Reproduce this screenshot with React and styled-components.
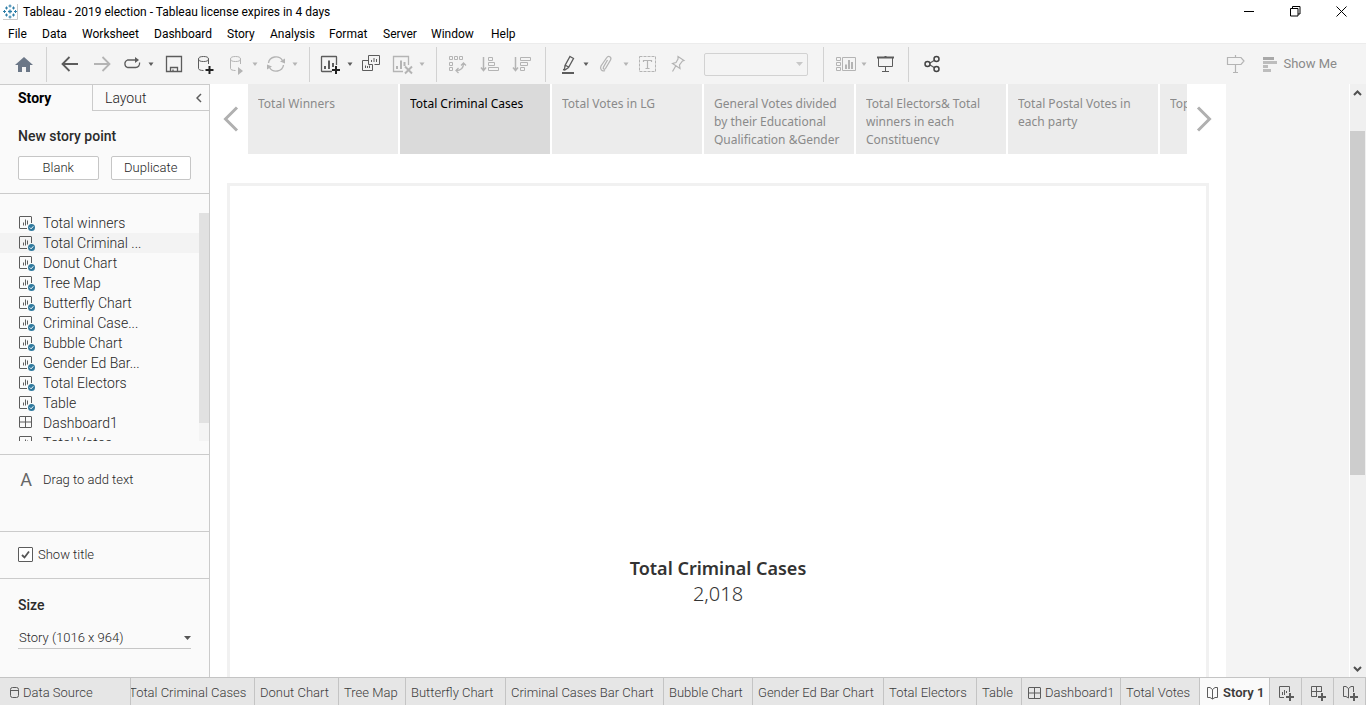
import React from "react";
import styled, { createGlobalStyle } from "styled-components";

const uiFont = `Roboto, "Liberation Sans", sans-serif`;
const bookFont = `"Noto Sans", "Open Sans", sans-serif`;

const GlobalStyle = createGlobalStyle`
  *, *::before, *::after { box-sizing: border-box; }
  body { margin: 0; background: #fff; font-family: ${uiFont}; color: #4a4a4a; }
  button, select, input { font: inherit; color: inherit; }
  button { padding: 0; border: 0; background: none; cursor: pointer; }
  ul { margin: 0; padding: 0; list-style: none; }
  h1, h2, p { margin: 0; }
`;

const Window = styled.div`
  display: flex;
  flex-direction: column;
  height: 100vh;
  overflow: hidden;
`;

/* ---------- title bar and menu ---------- */

const TitleBar = styled.header`
  display: flex;
  align-items: center;
  flex: none;
  height: 23px;
  padding: 0 2px 0 3px;
  gap: 5px;
  color: #000;
`;

const AppTitle = styled.h1`
  flex: 1;
  font-size: 12px;
  font-weight: 400;
  line-height: 16px;
`;

const AppLogo = styled.svg`
  width: 15px;
  height: 16px;
`;

const WindowButtons = styled.div`
  display: flex;
`;

const WindowButton = styled.button`
  display: grid;
  place-items: center;
  width: 46px;
  height: 20px;
`;

const MenuBar = styled.nav`
  display: flex;
  align-items: center;
  flex: none;
  height: 20px;
  padding: 2px 0 0 8px;
  color: #000;
  font-size: 12px;
  line-height: 16px;
`;

const MenuItem = styled.button`
  width: ${(p) => p.$width}px;
  flex: none;
  text-align: left;
  white-space: nowrap;
`;

/* ---------- toolbar ---------- */

const Toolbar = styled.div`
  display: flex;
  align-items: center;
  flex: none;
  height: 41px;
  padding: 0 29px 0 12px;
  border-top: 1px solid #ececec;
  background: #f4f4f4;
`;

const Tool = styled.button`
  display: block;
  flex: none;
  width: ${(p) => (p.$caret ? 8 : 24)}px;
  height: 24px;
  margin-left: ${(p) => p.$gap || 0}px;
  color: ${(p) => (p.$off ? "#b4b4b4" : "#5c5c5c")};
  svg { display: block; width: 100%; height: 24px; fill: none; stroke: currentColor; }
`;

const Divider = styled.span`
  flex: none;
  width: 1px;
  height: 35px;
  margin: 0 10px;
  background: #d2d2d2;
`;

const FitSelect = styled.div`
  display: grid;
  align-items: center;
  flex: none;
  width: 104px;
  margin: 0 5px 0 14px;
  > * { grid-area: 1 / 1; }
  svg { justify-self: end; margin-right: 5px; pointer-events: none; }
`;

const FitInput = styled.select`
  appearance: none;
  width: 100%;
  height: 23px;
  border: 1px solid #d2d2d2;
  border-radius: 2px;
  background: #f4f4f4;
  &:disabled { opacity: 1; }
`;

const Spacer = styled.span`
  flex: 1;
`;

const ShowMe = styled.button`
  display: flex;
  align-items: center;
  gap: 5px;
  margin-left: 16px;
  color: #8a8a8a;
  font-size: 13px;
  line-height: 20px;
`;

/* ---------- left pane ---------- */

const Workspace = styled.main`
  display: flex;
  flex: 1;
  min-height: 0;
`;

const Pane = styled.aside`
  display: flex;
  flex-direction: column;
  flex: none;
  width: 210px;
  border-right: 1px solid #cbcbcb;
  background: #fafafa;
  color: #262626;
  font-weight: 300;
`;

const PaneTabs = styled.div`
  display: flex;
  flex: none;
  height: 27px;
  border-top: 1px solid #cbcbcb;
`;

const PaneTab = styled.button`
  display: flex;
  align-items: center;
  justify-content: space-between;
  width: ${(p) => (p.$active ? 92 : 117)}px;
  padding: 0 7px 0 ${(p) => (p.$active ? 18 : 12)}px;
  border-left: ${(p) => (p.$active ? 0 : 1)}px solid #cbcbcb;
  border-bottom: ${(p) => (p.$active ? 0 : 1)}px solid #cbcbcb;
  color: ${(p) => (p.$active ? "#000" : "#222")};
  font-size: 14px;
  font-weight: ${(p) => (p.$active ? 700 : 300)};
`;

const Section = styled.section`
  flex: none;
  height: ${(p) => p.$height}px;
  padding: ${(p) => p.$pad || "0 18px"};
  border-bottom: 1px solid #cbcbcb;
`;

const Heading = styled.h2`
  display: block;
  color: #2b2b2b;
  font-size: 14px;
  font-weight: 500;
  line-height: 18px;
`;

const ButtonRow = styled.div`
  display: flex;
  gap: 12px;
  margin-top: 11px;
`;

const PointButton = styled.button`
  width: 81px;
  height: 24px;
  border: 1px solid #c6c6c6;
  border-radius: 2px;
  background: #fff;
  font-size: 13px;
  line-height: 20px;
`;

const SheetArea = styled.div`
  display: flex;
  height: 228px;
  overflow: hidden;
`;

const SheetList = styled.ul`
  flex: 1;
`;

const SheetRow = styled.li`
  display: flex;
  align-items: center;
  gap: 7px;
  height: 20px;
  padding-left: 18px;
  background: ${(p) => (p.$active ? "#f3f3f3" : "transparent")};
  font-size: 14px;
  line-height: 20px;
  svg { flex: none; }
`;

const ListTrack = styled.div`
  width: 10px;
  background: #f4f4f4;
`;

const ListThumb = styled.div`
  height: 92%;
  background: #e1e1e1;
`;

const DragText = styled.div`
  display: flex;
  align-items: center;
  gap: 9px;
  height: 48px;
  padding-left: 18px;
  font-size: 13px;
`;

const LetterA = styled.span`
  width: 16px;
  color: #666;
  font-size: 18px;
  font-weight: 400;
  text-align: center;
`;

const CheckLabel = styled.label`
  display: flex;
  align-items: center;
  gap: 5px;
  height: 44px;
  font-size: 13px;
`;

const CheckBox = styled.input`
  appearance: none;
  width: 15px;
  height: 15px;
  margin: 0;
  border: 1px solid #5c5c5c;
  border-radius: 1px;
  background: #fff url("data:image/svg+xml,%3Csvg xmlns='http://www.w3.org/2000/svg' width='13' height='13'%3E%3Cpath d='M3 7l2.5 2.5L10 3.5' fill='none' stroke='%23555' stroke-width='1.8'/%3E%3C/svg%3E") center no-repeat;
`;

const SizeBlock = styled.div`
  padding: 17px 18px 0;
`;

const SizeField = styled.div`
  display: grid;
  align-items: center;
  margin-top: 12px;
  > * { grid-area: 1 / 1; }
  svg { justify-self: end; pointer-events: none; }
`;

const SizeSelect = styled.select`
  appearance: none;
  width: 100%;
  height: 23px;
  padding: 0 0 0 1px;
  border: 0;
  border-bottom: 1px solid #c6c6c6;
  background: transparent;
  font-size: 13px;
`;

/* ---------- story canvas ---------- */

const Canvas = styled.div`
  display: flex;
  flex: 1;
  min-width: 0;
  background: #f4f4f4;
`;

const Story = styled.article`
  flex: 0 1 1016px;
  min-width: 0;
  overflow: hidden;
  background: #fff;
`;

const Navigator = styled.div`
  display: flex;
  height: 70px;
`;

const NavArrow = styled.button`
  flex: none;
  display: flex;
  align-items: center;
  justify-content: ${(p) => (p.$next ? "flex-start" : "flex-end")};
  width: ${(p) => (p.$next ? 39 : 38)}px;
  height: 70px;
  padding: 0 9px;
`;

const PointStrip = styled.div`
  display: flex;
  flex: 1;
  gap: 2px;
  min-width: 0;
  overflow: hidden;
`;

const PointCard = styled.button`
  flex: none;
  display: flex;
  align-items: flex-start;
  width: 150px;
  height: 70px;
  padding: 11px 10px 0;
  background: ${(p) => (p.$active ? "#dadada" : "#ececec")};
  color: ${(p) => (p.$active ? "#000" : "#8a8a8a")};
  font: 400 12px/18px ${bookFont};
  text-align: left;
`;

const CardText = styled.span`
  max-height: 50px;
  overflow: hidden;
`;

const StoryFrame = styled.section`
  display: flex;
  flex-direction: column;
  align-items: center;
  justify-content: center;
  height: 796px;
  margin: 29px 17px 0;
  border: 3px solid #f1f1f1;
  color: #333;
  font-family: ${bookFont};
`;

const FigureTitle = styled.h2`
  font-size: 18px;
  font-weight: 600;
  line-height: 26px;
`;

const FigureValue = styled.p`
  font-size: 20px;
  font-weight: 300;
  line-height: 26px;
`;

const ScrollTrack = styled.div`
  display: flex;
  flex-direction: column;
  flex: none;
  width: 17px;
  padding: 0 1px 0 0;
  margin-left: auto;
  border-left: 1px solid #fff;
  background: #f0f0f0;
`;

const ScrollEnd = styled.button`
  display: grid;
  place-items: center;
  flex: none;
  height: 17px;
`;

const ScrollRail = styled.div`
  flex: 1;
  padding-top: 30px;
`;

const ScrollThumb = styled.div`
  height: 65%;
  background: #cdcdcd;
`;

/* ---------- sheet tabs ---------- */

const TabBar = styled.footer`
  display: flex;
  flex: none;
  height: 28px;
  border-top: 1px solid #c4c4c4;
  background: #e6e6e6;
`;

const SheetTab = styled.button`
  display: flex;
  align-items: center;
  justify-content: ${(p) => (p.$icon ? "center" : "flex-start")};
  gap: 4px;
  flex: none;
  width: ${(p) => p.$width}px;
  padding: 2px 0 0 ${(p) => (p.$icon ? 0 : p.$pad ?? 5)}px;
  overflow: hidden;
  border-right: 1px solid #c4c4c4;
  background: ${(p) => (p.$active ? "#fafafa" : "transparent")};
  color: #3c3c3c;
  font-size: 13px;
  font-weight: ${(p) => (p.$active ? 600 : 300)};
  line-height: 20px;
  white-space: nowrap;
  svg { flex: none; }
`;

const ClippedLabel = styled.span`
  margin-left: -2px;
`;

/* ---------- drawings ---------- */

const Caret = ({ gap, off }) => (
  <Tool $caret $gap={gap} $off={off} aria-label="More options">
    <svg viewBox="0 0 8 24"><path d="M1.500 10.500h5L4 14z" fill="currentColor" stroke="none" /></svg>
  </Tool>
);

const Icon = ({ gap, off, label, children }) => (
  <Tool $gap={gap} $off={off} aria-label={label}>
    <svg viewBox="0 0 24 24">{children}</svg>
  </Tool>
);

const DownArrow = ({ color }) => (
  <svg width="7" height="4" viewBox="0 0 7 4"><path d="M0 0h7L3.500 4z" fill={color} /></svg>
);

const Logo = () => (
  <AppLogo viewBox="0 0 15 16">
    <path d="M14.500 0v15.500H0" fill="none" stroke="#c9c9c9" />
    <g stroke="#2f7fa8" fill="none">
      <path d="M7 5.500v4M5 7.500h4" strokeWidth="1.300" />
      <path d="M7 0.500v3M5.500 2h3M7 11.500v3M5.500 13h3M1.500 6v3M0 7.500h3M12.500 6v3M11 7.500h3" />
      <path d="M3.500 2.500v3M2 4h3M10.500 2.500v3M9 4h3M3.500 9.500v3M2 11h3M10.500 9.500v3M9 11h3" />
    </g>
  </AppLogo>
);

const WorksheetIcon = () => (
  <svg width="18" height="18" viewBox="0 0 18 18" fill="none">
    <path d="M9 14.500H2a.5.5 0 0 1-.5-.5V3a.5.5 0 0 1 .5-.5h11a.5.5 0 0 1 .5.5v6" stroke="#5c5c5c" />
    <path d="M5.500 8.500v3M7.500 5.500v6M9.500 6.500v4" stroke="#5c5c5c" />
    <circle cx="13.500" cy="13.500" r="3.500" fill="#317a9e" />
    <path d="M11.800 13.500l1.300 1.300 2.200-2.500" stroke="#fff" />
  </svg>
);

const GridIcon = ({ size = 18 }) => (
  <svg width={size} height={size} viewBox={size === 18 ? "0 0 18 18" : "1 1 13 13"} fill="none" stroke="#5c5c5c">
    <rect x="1.500" y="2.500" width="12" height="11" rx=".5" />
    <path d="M7.500 2.500v11M1.500 8h12" />
  </svg>
);

const NewTabIcon = ({ kind }) => (
  <svg width="18" height="16" viewBox="0 0 18 16" fill="none" stroke="#5c5c5c">
    {kind === "sheet" && <path d="M7 12.500H2.500v-11h10V7M5.500 7v3M7.500 5v5M9.500 6v2" />}
    {kind === "dash" && <path d="M8 11.500H2.500v-10h10V7M7.500 1.500v10M2.500 6.500h10" />}
    {kind === "story" && <path d="M7.500 3.500L5 1.500H2.500v10H5l2.500 1.500M7.500 3.500L10 1.500h2.500V7M7.500 3.500V13" />}
    <path d="M13 8v8M9 12h8" strokeWidth="2" />
  </svg>
);

const Cylinder = () => (
  <>
    <ellipse cx="10.500" cy="7" rx="5" ry="2.500" />
    <path d="M5.500 7v9.500c0 1.200 2 2 5 2M15.500 7v5" />
  </>
);

const Chevron = ({ left }) => (
  <svg width="16" height="26" viewBox="0 0 16 26" fill="none" stroke="#b0b0b0" strokeWidth="3">
    <path d={left ? "M14 1.500L2.500 13 14 24.500" : "M2 1.500L13.500 13 2 24.500"} />
  </svg>
);

/* ---------- data ---------- */

const menus = [["File", 34], ["Data", 40], ["Worksheet", 72], ["Dashboard", 73], ["Story", 43], ["Analysis", 59], ["Format", 54], ["Server", 48], ["Window", 60], ["Help", 30]];

const sheets = ["Total winners", "Total Criminal ...", "Donut Chart", "Tree Map", "Butterfly Chart", "Criminal Case...", "Bubble Chart", "Gender Ed Bar...", "Total Electors", "Table", "Dashboard1", "Total Votes"];

const points = ["Total Winners", "Total Criminal Cases", "Total Votes in LG", "General Votes divided by their Educational Qualification &Gender", "Total Electors& Total winners in each Constituency", "Total Postal Votes in each party", "Top"];

const tabs = [["Donut Chart", 84], ["Tree Map", 67], ["Butterfly Chart", 100], ["Criminal Cases Bar Chart", 158], ["Bubble Chart", 89], ["Gender Ed Bar Chart", 131], ["Total Electors", 93], ["Table", 45]];

export default function App() {
  return (
    <Window>
      <GlobalStyle />
      <TitleBar>
        <Logo />
        <AppTitle>Tableau - 2019 election - Tableau license expires in 4 days</AppTitle>
        <WindowButtons>
          <WindowButton aria-label="Minimize">
            <svg width="11" height="11"><path d="M0 5.500h10" stroke="#000" /></svg>
          </WindowButton>
          <WindowButton aria-label="Restore">
            <svg width="11" height="11" fill="none" stroke="#000"><path d="M.5 2.500h7.500v7.500H.5zM2.500 2.500v-2h7.500V8H8" /></svg>
          </WindowButton>
          <WindowButton aria-label="Close">
            <svg width="11" height="11" stroke="#000"><path d="M.5.5l10 10M10.500.5l-10 10" /></svg>
          </WindowButton>
        </WindowButtons>
      </TitleBar>

      <MenuBar>
        {menus.map(([name, width]) => <MenuItem key={name} $width={width}>{name}</MenuItem>)}
      </MenuBar>

      <Toolbar>
        <Icon label="Home"><path d="M3 13l9-8 9 8h-3v7h-4v-5h-4v5H6v-7z" fill="#6b7787" stroke="none" /></Icon>
        <Divider />
        <Icon label="Undo"><path d="M12.500 5L5.500 12l7 7M5.500 12H21" strokeWidth="1.800" /></Icon>
        <Icon gap={8} off label="Redo"><path d="M13.500 5l7 7-7 7M20.500 12H5" strokeWidth="1.800" /></Icon>
        <Icon gap={6} label="Replay">
          <path d="M17 8H8.500a4 4 0 0 0 0 7.500h8a4 4 0 0 0 4-5" strokeWidth="1.300" />
          <path d="M16 5l4 3-4 3z" fill="currentColor" stroke="none" />
        </Icon>
        <Caret gap={4} />
        <Icon gap={6} label="Save"><path d="M5.500 4.500h15v15h-15zM9.500 19.500v-4h7v4M12 17.500v2" strokeWidth="1.300" /></Icon>
        <Icon gap={8} label="New data source">
          <Cylinder /><path d="M16.500 14v8M12.500 18h8" stroke="#222" strokeWidth="2" />
        </Icon>
        <Icon gap={8} off label="Run updates">
          <Cylinder /><path d="M13 15l5 4-5 4z" fill="currentColor" stroke="none" />
        </Icon>
        <Caret gap={2} off />
        <Icon gap={4} off label="Refresh">
          <path d="M5.500 11a7.500 7 0 0 1 14-2.500M20.500 13a7.500 7 0 0 1-14 2.500" strokeWidth="1.400" />
          <path d="M22 6.500v5l-5-2zM4 17.500v-5l5 2z" fill="currentColor" stroke="none" />
        </Icon>
        <Caret gap={4} off />
        <Divider />
        <Icon label="New worksheet">
          <path d="M12 19.500H2a.5.5 0 0 1-.5-.5V5a.5.5 0 0 1 .5-.5h14a.5.5 0 0 1 .5.500v8" strokeWidth="1.300" />
          <path d="M5 14v3M9 8.500V17M13 11v4" strokeWidth="2" />
          <path d="M16 14v8M12 18h8" stroke="#222" strokeWidth="2" />
        </Icon>
        <Caret gap={2} />
        <Icon gap={4} label="Duplicate sheet">
          <path d="M10.500 9V3.500h11v9h-5M10.500 8.500h-6v10h10v-6h-4v-4M13.500 8v2M16 6v4M18.500 7v3M7.500 13.500V16M9.500 14v2M11.500 13.500V16" />
        </Icon>
        <Icon gap={8} off label="Clear sheet">
          <path d="M13 19.500H3.500v-15h15V13" strokeWidth="1.300" />
          <path d="M7 14v3M11 8.500V17M14.500 10v4" strokeWidth="2" />
          <path d="M15 14.500l7 7M22 14.500l-7 7" strokeWidth="2" />
        </Icon>
        <Caret gap={4} off />
        <Divider />
        <Icon off label="Swap rows and columns">
          <path d="M2.500 4.500h3v3h-3zM7.500 4.500h3v3h-3zM12.500 4.500h3v3h-3zM2.500 10.500h3v3h-3zM2.500 15.500h3v3h-3z" />
          <path d="M16.500 11.500c0 4-2.500 7-7.500 7M14 13.500l2.500-2.500 2.500 2.500M11.500 16L9 18.500l2.500 2.500" strokeWidth="1.300" />
        </Icon>
        <Icon gap={8} off label="Sort ascending">
          <path d="M4.500 5v14M2 15.500L4.500 18.500l2.500-3" strokeWidth="1.500" />
          <path d="M9.500 5.500h4v3h-4zM9.500 10.500h6v3h-6zM9.500 15.500h10v3h-10z" />
        </Icon>
        <Icon gap={8} off label="Sort descending">
          <path d="M4.500 5v14M2 15.500L4.500 18.500l2.500-3" strokeWidth="1.500" />
          <path d="M9.500 5.500h10v3h-10zM9.500 10.500h7v3h-7zM9.500 15.500h4v3h-4z" />
        </Icon>
        <Divider />
        <Icon label="Highlight">
          <path d="M14 4.500l3.500 2-5 9-3.500 2.500-.5-.5.500-4zM9 13l3.500 2M9 18l-2-.5" strokeWidth="1.300" />
          <path d="M6 21h12" strokeWidth="2" />
        </Icon>
        <Caret gap={2} />
        <Icon gap={4} off label="Group members">
          <path d="M13.500 8l-4 7c-1 2 1 3 2 1.500l5-8.500c1.500-3-2-5-4-2L7 14c-1.500 3 1 6 4 4.500" strokeWidth="1.300" />
        </Icon>
        <Caret gap={4} off />
        <Icon gap={6} off label="Show labels">
          <path d="M3.500 4.500h16v15h-16z" strokeDasharray="3 1" />
          <path d="M7.500 10V8.500h8V10M11.500 8.500v8M9.500 16.500h4" strokeWidth="1.200" />
        </Icon>
        <Icon gap={6} off label="Pin">
          <path d="M12 4.500l6 4-1.500.5-3 4 .5 3.500-7.500-5 3.500-1 2-3.500zM10 13.500L6.500 19.500" strokeWidth="1.200" />
        </Icon>
        <FitSelect>
          <FitInput aria-label="Fit" disabled />
          <DownArrow color="#c8c8c8" />
        </FitSelect>
        <Divider />
        <Icon off label="Show cards">
          <path d="M2.500 5.500h4v3h-4zM2.500 10.500h4v3h-4zM2.500 15.500h4v3h-4zM8.500 5.500h13v13h-13z" />
          <path d="M12 12.500V17M15 8v9M18 10v7" strokeWidth="2" />
        </Icon>
        <Caret gap={2} off />
        <Icon gap={6} label="Presentation mode">
          <path d="M3 5.500h17M11.500 4v1.500" strokeWidth="2" />
          <path d="M4.500 6v8.500h14V6M11.500 14.500v5M8 19.500h7" />
        </Icon>
        <Divider />
        <Icon label="Share">
          <path d="M11 11l5-3M11 13l5 3" strokeWidth="1.300" />
          <g stroke="#444" strokeWidth="1.500"><circle cx="8.500" cy="12" r="2.500" /><circle cx="17.500" cy="7" r="2.500" /><circle cx="17.500" cy="17" r="2.500" /></g>
        </Icon>
        <Spacer />
        <Icon off label="Guide">
          <path d="M12.500 3v2M12.500 12.500V20M10 20.500h5" strokeWidth="1.200" />
          <path d="M4.500 5.500h13.500l3 3.500-3 3.500H4.500z" strokeWidth="1.200" />
        </Icon>
        <ShowMe>
          <svg width="15" height="15" viewBox="0 0 15 15" fill="#bdbdbd"><path d="M0 0h11v3H0z" fill="#a8a8a8" /><path d="M0 4h14v3H0zM0 8h5v3H0zM0 12h8v3H0z" /></svg>
          Show Me
        </ShowMe>
      </Toolbar>

      <Workspace>
        <Pane>
          <PaneTabs>
            <PaneTab $active>Story</PaneTab>
            <PaneTab>
              Layout
              <svg width="6" height="10" fill="none" stroke="#5c5c5c" strokeWidth="1.500"><path d="M5 1L1 5l4 4" /></svg>
            </PaneTab>
          </PaneTabs>
          <Section $height={83} $pad="16px 18px 0">
            <Heading>New story point</Heading>
            <ButtonRow>
              <PointButton>Blank</PointButton>
              <PointButton>Duplicate</PointButton>
            </ButtonRow>
          </Section>
          <Section $height={261} $pad="19px 0 0">
            <SheetArea>
              <SheetList>
                {sheets.map((name) => (
                  <SheetRow key={name} $active={name === "Total Criminal ..."}>
                    {name === "Dashboard1" ? <GridIcon /> : <WorksheetIcon />}
                    {name}
                  </SheetRow>
                ))}
              </SheetList>
              <ListTrack><ListThumb /></ListTrack>
            </SheetArea>
          </Section>
          <Section $height={77} $pad="0">
            <DragText><LetterA>A</LetterA>Drag to add text</DragText>
          </Section>
          <Section $height={47}>
            <CheckLabel><CheckBox type="checkbox" defaultChecked />Show title</CheckLabel>
          </Section>
          <SizeBlock>
            <Heading as="label" htmlFor="story-size">Size</Heading>
            <SizeField>
              <SizeSelect id="story-size"><option>Story (1016 x 964)</option></SizeSelect>
              <DownArrow color="#555" />
            </SizeField>
          </SizeBlock>
        </Pane>

        <Canvas>
          <Story>
            <Navigator>
              <NavArrow aria-label="Previous story point"><Chevron left /></NavArrow>
              <PointStrip>
                {points.map((text, i) => (
                  <PointCard key={text} $active={i === 1}><CardText>{text}</CardText></PointCard>
                ))}
              </PointStrip>
              <NavArrow $next aria-label="Next story point"><Chevron /></NavArrow>
            </Navigator>
            <StoryFrame>
              <FigureTitle>Total Criminal Cases</FigureTitle>
              <FigureValue>2,018</FigureValue>
            </StoryFrame>
          </Story>
          <ScrollTrack>
            <ScrollEnd aria-label="Scroll up">
              <svg width="9" height="6" fill="none" stroke="#505050" strokeWidth="2"><path d="M1 5l3.500-3.500L8 5" /></svg>
            </ScrollEnd>
            <ScrollRail><ScrollThumb /></ScrollRail>
            <ScrollEnd aria-label="Scroll down">
              <svg width="9" height="6" fill="none" stroke="#505050" strokeWidth="2"><path d="M1 1l3.500 3.500L8 1" /></svg>
            </ScrollEnd>
          </ScrollTrack>
        </Canvas>
      </Workspace>

      <TabBar>
        <SheetTab $width={131} $pad={10}>
          <svg width="9" height="12" fill="none" stroke="#5c5c5c"><rect x=".5" y=".5" width="8" height="10" rx="2" /><path d="M.5 3.500h8" /></svg>
          Data Source
        </SheetTab>
        <SheetTab $width={124} $pad={0}><ClippedLabel>Total Criminal Cases</ClippedLabel></SheetTab>
        {tabs.map(([name, width]) => <SheetTab key={name} $width={width}>{name}</SheetTab>)}
        <SheetTab $width={99} $pad={6}><GridIcon size={13} />Dashboard1</SheetTab>
        <SheetTab $width={79}>Total Votes</SheetTab>
        <SheetTab $width={70} $active $pad={6}>
          <svg width="13" height="14" viewBox="0 0 13 14" fill="none" stroke="#5c5c5c">
            <path d="M1.500 1.500H4l2.500 2 2.500-2h2.500v10H9l-2.500 1.500L4 11.500H1.500zM6.500 3.500V13" />
          </svg>
          Story 1
        </SheetTab>
        <SheetTab $width={32} $icon aria-label="New worksheet"><NewTabIcon kind="sheet" /></SheetTab>
        <SheetTab $width={32} $icon aria-label="New dashboard"><NewTabIcon kind="dash" /></SheetTab>
        <SheetTab $width={32} $icon aria-label="New story"><NewTabIcon kind="story" /></SheetTab>
      </TabBar>
    </Window>
  );
}
